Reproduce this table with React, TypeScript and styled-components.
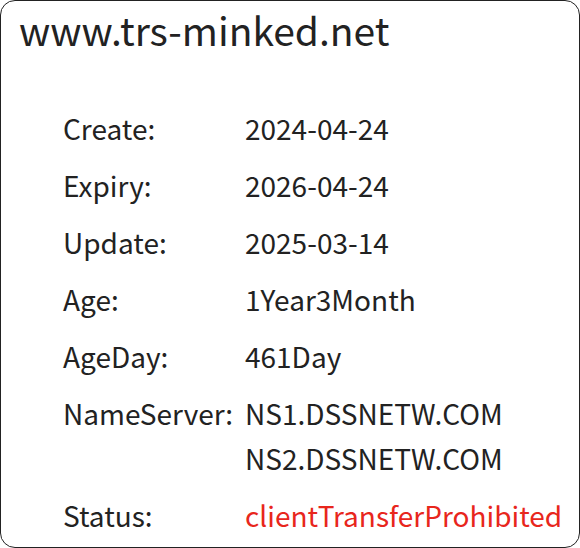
import * as React from 'react';
import styled, { createGlobalStyle } from 'styled-components';

const fontStack = '"Noto Sans CJK SC", "Noto Sans", sans-serif';

interface DomainRow {
  label: string;
  values: string[];
  alert?: boolean;
}

const rows: DomainRow[] = [
  { label: 'Create:', values: ['2024-04-24'] },
  { label: 'Expiry:', values: ['2026-04-24'] },
  { label: 'Update:', values: ['2025-03-14'] },
  { label: 'Age:', values: ['1Year3Month'] },
  { label: 'AgeDay:', values: ['461Day'] },
  { label: 'NameServer:', values: ['NS1.DSSNETW.COM', 'NS2.DSSNETW.COM'] },
  { label: 'Status:', values: ['clientTransferProhibited'], alert: true },
];

const GlobalStyle = createGlobalStyle`
  html, body {
    margin: 0;
    padding: 0;
    background: #ffffff;
  }
  body {
    font-family: ${fontStack};
  }
`;

const Card = styled.div`
  box-sizing: border-box;
  width: 580px;
  height: 548px;
  border: 1px solid #222;
  border-radius: 15px;
  background: #fff;
  padding: 0 18px;
  overflow: hidden;
`;

const Title = styled.h1`
  margin: 0;
  font-family: ${fontStack};
  font-weight: 400;
  font-size: 39px;
  line-height: 56px;
  color: #222;
`;

const InfoList = styled.dl`
  display: grid;
  grid-template-columns: 182px 1fr;
  row-gap: 12px;
  margin: 49px 0 0 44px;
`;

const Label = styled.dt`
  margin: 0;
  font-size: 28px;
  line-height: 45px;
  color: #222;
`;

const ValueCell = styled.dd<{ $alert?: boolean }>`
  margin: 0;
  font-size: 28px;
  line-height: 45px;
  color: ${p => (p.$alert ? '#e8261c' : '#222')};
  white-space: nowrap;
`;

const ValueLine = styled.div``;

export default function App() {
  return (
    <>
      <GlobalStyle />
      <Card>
        <Title>www.trs-minked.net</Title>
        <InfoList>
          {rows.map(row => (
            <React.Fragment key={row.label}>
              <Label>{row.label}</Label>
              <ValueCell $alert={row.alert}>
                {row.values.map(v => (
                  <ValueLine key={v}>{v}</ValueLine>
                ))}
              </ValueCell>
            </React.Fragment>
          ))}
        </InfoList>
      </Card>
    </>
  );
}
